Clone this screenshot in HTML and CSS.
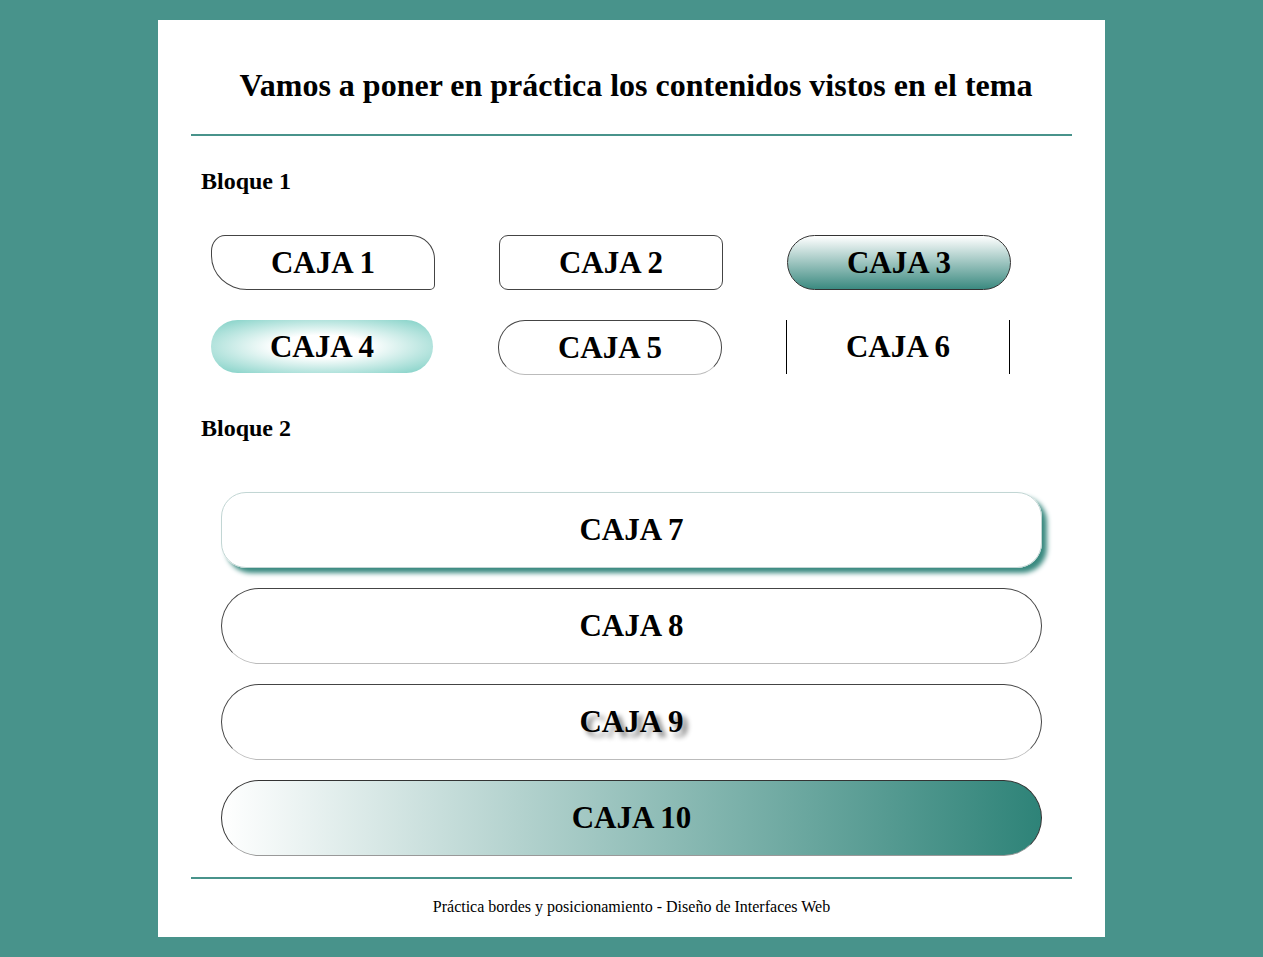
FILE: index.html
```html
<!DOCTYPE html>
<html lang="es">
<head>
<meta charset="utf-8">
<title>Práctica bordes y posicionamiento</title>
<link rel="stylesheet" href="styles.css">
</head>
<body>
<div class="page">
  <header class="head">
    <h1 class="title">Vamos a poner en práctica los contenidos vistos en el tema</h1>
  </header>
  <hr class="rule">
  <section class="block">
    <h2 class="block-title">Bloque 1</h2>
    <div class="grid">
      <div class="box caja1">CAJA 1</div>
      <div class="box caja2">CAJA 2</div>
      <div class="box caja3">CAJA 3</div>
      <div class="box caja4">CAJA 4</div>
      <div class="box caja5">CAJA 5</div>
      <div class="box caja6">CAJA 6</div>
    </div>
  </section>
  <section class="block">
    <h2 class="block-title">Bloque 2</h2>
    <div class="list">
      <div class="wide caja7">CAJA 7</div>
      <div class="wide caja8">CAJA 8</div>
      <div class="wide caja9">CAJA 9</div>
      <div class="wide caja10">CAJA 10</div>
    </div>
  </section>
  <hr class="rule rule-foot">
  <footer class="foot">Práctica bordes y posicionamiento - Diseño de Interfaces Web</footer>
</div>
</body>
</html>
```

FILE: styles.css
```css
html, body {
  margin: 0;
  padding: 0;
}
body {
  background: #48938b;
  font-family: "Liberation Serif", "Times New Roman", serif;
  color: #000;
  padding: 20px 0;
}
.page {
  width: 881px;
  margin: 0 auto;
  background: #fff;
  padding: 0 33px;
  height: 917px;
  box-sizing: content-box;
  display: flex;
  flex-direction: column;
}
.head {
  height: 114px;
  display: flex;
  align-items: center;
  justify-content: center;
  padding-left: 9px;
}
.title {
  margin: 16px 0 0 0;
  font-size: 32px;
  font-weight: bold;
}
.rule {
  border: none;
  height: 2px;
  background: #48938b;
  margin: 0;
}
.block {
  padding: 0 0 0 10px;
}
.block-title {
  margin: 0;
  font-size: 24px;
  font-weight: bold;
  line-height: 28px;
  padding-top: 31px;
}
.grid {
  display: grid;
  grid-template-columns: 288px 288px 288px;
  row-gap: 30px;
  margin: 40px 0 8px 10px;
}
.box {
  width: 222px;
  height: 53px;
  display: flex;
  align-items: center;
  justify-content: center;
  font-size: 31px;
  font-weight: bold;
  box-sizing: content-box;
}
.caja1 {
  border: 1px solid #444;
  border-radius: 14px 24px 5px 36px / 16px 24px 5px 34px;
}
.caja2 {
  border: 1px solid #444;
  border-radius: 9px;
}
.caja3 {
  border: 1px solid #333;
  border-radius: 28px;
  background: linear-gradient(to bottom, #ffffff 0%, #3b8a80 100%);
}
.caja4 {
  border-radius: 27px;
  background: radial-gradient(ellipse at center, #ffffff 30%, #7acec3 100%);
}
.grid .caja5, .grid .caja6 {
  margin-left: -1px;
}
.caja5 {
  border: 1px solid #444;
  border-bottom-color: #bbb;
  border-radius: 27px;
}
.caja6 {
  border-left: 1px solid #000;
  border-right: 1px solid #000;
  height: 54px;
}
.list {
  display: flex;
  flex-direction: column;
  gap: 20px;
  margin: 50px 30px 0 20px;
}
.wide {
  height: 74px;
  display: flex;
  align-items: center;
  justify-content: center;
  font-size: 31px;
  font-weight: bold;
  border: 1px solid #444;
  border-bottom-color: #bbb;
  border-radius: 38px;
}
.caja7 {
  border: 1px solid #c2d6d4;
  border-radius: 25px;
  box-shadow: 5px 5px 5px #3a8a80;
}
.caja9 {
  text-shadow: 5px 5px 5px #888;
}
.caja10 {
  border-color: #333;
  border-bottom-color: #999;
  background: linear-gradient(to right, #ffffff 0%, #2e8378 100%);
}
.rule-foot {
  margin-top: 21px;
}
.foot {
  flex: 1;
  display: flex;
  align-items: center;
  justify-content: center;
  font-size: 16px;
  padding-bottom: 2px;
}
```
